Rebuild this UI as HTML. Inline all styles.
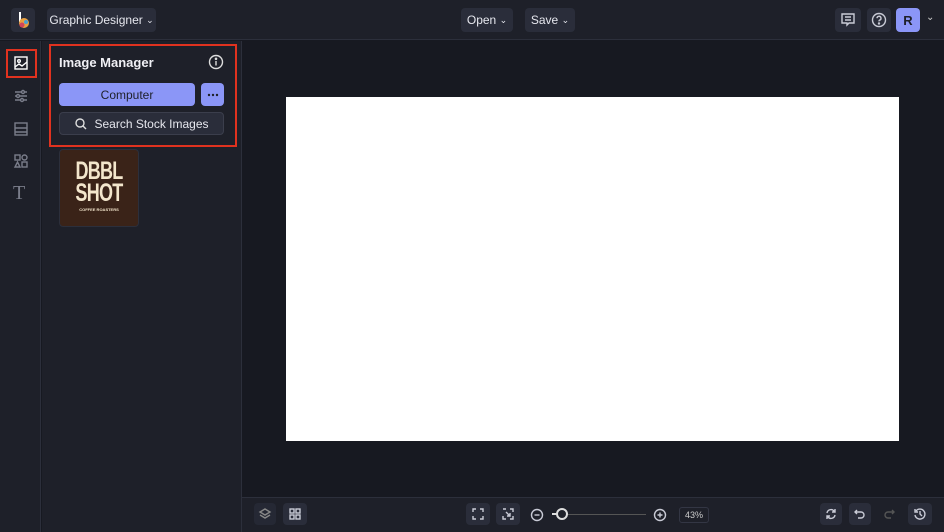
<!DOCTYPE html>
<html><head><style>
*{box-sizing:border-box;margin:0;padding:0}
body{width:944px;height:532px;background:#171921;font-family:"Liberation Sans",sans-serif;color:#e6e7ee;position:relative;overflow:hidden;font-size:12px}
.abs{position:absolute}
.btn{position:absolute;background:#2a2d3a;border-radius:4px;display:flex;align-items:center;justify-content:center;color:#e6e7ee}
svg{stroke:#c9cbd6;fill:none;stroke-width:1.4}
</style></head><body>
<div class="abs" style="left:0;top:0;width:944px;height:40px;background:#1e2029;border-bottom:1px solid #2c2f3b"></div>
<div class="btn" style="left:11px;top:8px;width:24px;height:24px;background:#2a2d3a">
<svg width="16" height="20" viewBox="0 0 16 20"><line x1="5" y1="2" x2="5" y2="12" stroke="#fff" stroke-width="2"/><circle cx="9" cy="13" r="5" fill="#e8a040" stroke="none"/><circle cx="7" cy="15" r="2.5" fill="#d2455a" stroke="none"/><circle cx="11" cy="12" r="2" fill="#4aa0d0" stroke="none"/></svg></div>
<div class="btn" style="left:47px;top:8px;width:109px;height:24px;font-size:12px">Graphic Designer&nbsp;<span style="font-size:9px">⌄</span></div>
<div class="btn" style="left:461px;top:8px;width:52px;height:24px">Open&nbsp;<span style="font-size:9px">⌄</span></div>
<div class="btn" style="left:525px;top:8px;width:50px;height:24px">Save&nbsp;<span style="font-size:9px">⌄</span></div>
<div class="btn" style="left:835px;top:8px;width:26px;height:24px"><svg width="16" height="16" viewBox="0 0 16 16"><path d="M2 2h12v9H9l-2 2v-2H2z"/><path d="M5 5h6M5 8h6"/></svg></div>
<div class="btn" style="left:867px;top:8px;width:24px;height:24px"><svg width="16" height="16" viewBox="0 0 16 16"><circle cx="8" cy="8" r="6.5"/><path d="M6 6.2a2 2 0 1 1 2.5 2c-.5.2-.5.6-.5 1.2"/><circle cx="8" cy="11.5" r=".5" fill="#c9cbd6"/></svg></div>
<div class="btn" style="left:896px;top:8px;width:24px;height:24px;background:#8b96f7;color:#1e2029;font-weight:bold;font-size:13px">R</div>
<div class="abs" style="left:926px;top:12px;font-size:10px;color:#ccc">⌄</div>

<div class="abs" style="left:0;top:41px;width:41px;height:491px;background:#1e2029;border-right:1px solid #2c2f3b"></div>
<div class="abs" style="left:6px;top:49px;width:31px;height:29px;border:2px solid #e0321f"></div>
<svg class="abs" style="left:13px;top:55px" width="16" height="16" viewBox="0 0 16 16"><rect x="2" y="2" width="12" height="12" stroke="#fff"/><circle cx="6" cy="6" r="1.3" stroke="#fff"/><path d="M2 12l4-3 3 2 5-4" stroke="#fff"/></svg>
<svg class="abs" style="left:13px;top:88px" width="16" height="16" viewBox="0 0 16 16"><path d="M2 4h12M2 8h12M2 12h12" stroke="#7a7d8a"/><circle cx="10" cy="4" r="1.5" stroke="#7a7d8a" fill="#1e2029"/><circle cx="5" cy="8" r="1.5" stroke="#7a7d8a" fill="#1e2029"/><circle cx="9" cy="12" r="1.5" stroke="#7a7d8a" fill="#1e2029"/></svg>
<svg class="abs" style="left:13px;top:121px" width="16" height="16" viewBox="0 0 16 16"><rect x="2" y="2" width="12" height="12" stroke="#7a7d8a"/><path d="M2 7h12M2 11h12" stroke="#7a7d8a"/></svg>
<svg class="abs" style="left:13px;top:153px" width="16" height="16" viewBox="0 0 16 16"><rect x="2" y="2" width="5" height="5" stroke="#7a7d8a"/><circle cx="11.5" cy="4.5" r="2.5" stroke="#7a7d8a"/><path d="M4.5 9l2.5 5H2z" stroke="#7a7d8a"/><rect x="9" y="9" width="5" height="5" stroke="#7a7d8a"/></svg>
<div class="abs" style="left:13px;top:182px;font-size:20px;color:#7a7d8a;font-family:'Liberation Serif',serif">T</div>

<div class="abs" style="left:42px;top:41px;width:200px;height:491px;background:#1e2029;border-right:1px solid #2c2f3b"></div>
<div class="abs" style="left:49px;top:44px;width:188px;height:103px;border:2px solid #e0321f"></div>
<div class="abs" style="left:59px;top:55px;font-size:13px;font-weight:bold;color:#f0f0f5">Image Manager</div>
<svg class="abs" style="left:208px;top:54px" width="16" height="16" viewBox="0 0 16 16"><circle cx="8" cy="8" r="6.5" stroke="#ddd"/><path d="M8 7v4.5" stroke="#ddd"/><circle cx="8" cy="4.8" r=".6" fill="#ddd" stroke="#ddd"/></svg>
<div class="btn" style="left:59px;top:83px;width:136px;height:23px;background:#8b96f7;color:#1e2029;font-size:12px">Computer</div>
<div class="btn" style="left:201px;top:83px;width:23px;height:23px;background:#8b96f7"><svg width="12" height="4" viewBox="0 0 12 4"><circle cx="2" cy="2" r="1.2" fill="#1e2029" stroke="none"/><circle cx="6" cy="2" r="1.2" fill="#1e2029" stroke="none"/><circle cx="10" cy="2" r="1.2" fill="#1e2029" stroke="none"/></svg></div>
<div class="btn" style="left:59px;top:112px;width:165px;height:23px;border:1px solid #3b3e4c;background:#2a2d3a;font-size:12px"><svg width="14" height="14" viewBox="0 0 14 14" style="margin-right:6px"><circle cx="6" cy="6" r="4" stroke="#ddd"/><path d="M9 9l3 3" stroke="#ddd"/></svg>Search Stock Images</div>
<div class="abs" style="left:59px;top:149px;width:80px;height:78px;background:#3a2318;border-radius:4px;border:1px solid #2c2f3b;text-align:center;color:#f3e6cc;font-weight:bold">
<div style="font-size:25px;line-height:22px;margin-top:10px;transform:scaleX(.72);letter-spacing:-1px">DBBL<br>SHOT</div>
<div style="font-size:4px;margin-top:3px">COFFEE ROASTERS</div></div>

<div class="abs" style="left:286px;top:97px;width:613px;height:344px;background:#fff"></div>

<div class="abs" style="left:242px;top:497px;width:702px;height:35px;background:#1e2029;border-top:1px solid #2c2f3b"></div>
<div class="btn" style="left:254px;top:503px;width:22px;height:22px;background:#252834"><svg width="14" height="14" viewBox="0 0 14 14"><path d="M7 2l5 3-5 3-5-3z M2 8l5 3 5-3" stroke="#888"/></svg></div>
<div class="btn" style="left:283px;top:503px;width:24px;height:22px"><svg width="14" height="14" viewBox="0 0 14 14"><rect x="2" y="2" width="4" height="4"/><rect x="8" y="2" width="4" height="4"/><rect x="2" y="8" width="4" height="4"/><rect x="8" y="8" width="4" height="4"/></svg></div>
<div class="btn" style="left:466px;top:503px;width:24px;height:22px"><svg width="14" height="14" viewBox="0 0 14 14"><path d="M2 5V2h3M9 2h3v3M12 9v3H9M5 12H2V9"/></svg></div>
<div class="btn" style="left:496px;top:503px;width:24px;height:22px"><svg width="14" height="14" viewBox="0 0 14 14"><path d="M2 2h3M9 2h3v3M12 9v3H9M2 9v3h3M5 5L9 9M9 6v3H6"/></svg></div>
<svg class="abs" style="left:529px;top:507px" width="16" height="16" viewBox="0 0 16 16"><circle cx="8" cy="8" r="5.5"/><path d="M5.5 8h5"/></svg>
<div class="abs" style="left:552px;top:514px;width:94px;height:1px;background:#555"></div>
<div class="abs" style="left:552px;top:513px;width:6px;height:2px;background:#ddd"></div>
<div class="abs" style="left:556px;top:508px;width:12px;height:12px;border-radius:50%;border:2px solid #ddd;background:#1e2029"></div>
<svg class="abs" style="left:652px;top:507px" width="16" height="16" viewBox="0 0 16 16"><circle cx="8" cy="8" r="5.5"/><path d="M5.5 8h5M8 5.5v5"/></svg>
<div class="abs" style="left:679px;top:507px;width:30px;height:16px;border:1px solid #333644;border-radius:3px;font-size:9px;color:#ccc;text-align:center;line-height:14px">43%</div>
<div class="btn" style="left:820px;top:503px;width:22px;height:22px"><svg width="14" height="14" viewBox="0 0 14 14"><path d="M3 6a4 4 0 0 1 7-2l1 1M11 8a4 4 0 0 1-7 2l-1-1M11 2v3H8M3 12V9h3"/></svg></div>
<div class="btn" style="left:849px;top:503px;width:22px;height:22px"><svg width="14" height="14" viewBox="0 0 14 14"><path d="M4 3L2 5l2 2M2 5h6a3 3 0 0 1 0 6H5"/></svg></div>
<svg class="abs" style="left:882px;top:507px" width="14" height="14" viewBox="0 0 14 14"><path d="M10 3l2 2-2 2M12 5H6a3 3 0 0 0 0 6h3" stroke="#555"/></svg>
<div class="btn" style="left:908px;top:503px;width:24px;height:22px"><svg width="14" height="14" viewBox="0 0 14 14"><path d="M3 4a5 5 0 1 1-1 4M2 2v3h3M7 4v3l2 2"/></svg></div>
</body></html>
